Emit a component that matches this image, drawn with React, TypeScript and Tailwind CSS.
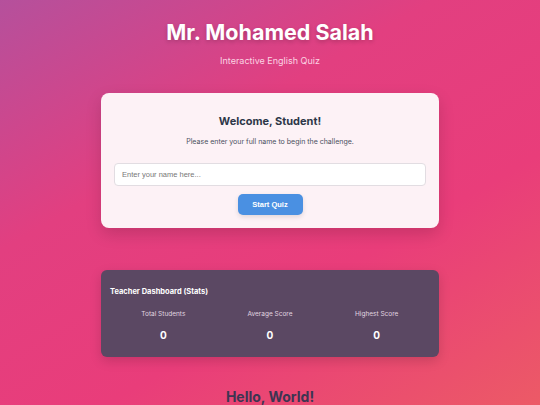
export default function App() {
    const stats = [
        { label: 'Total Students', value: 0 },
        { label: 'Average Score', value: 0 },
        { label: 'Highest Score', value: 0 },
    ];

    return (
        <div
            className="flex h-[405px] w-[540px] flex-col items-center overflow-hidden bg-[linear-gradient(150deg,#b5509c_0%,#e23f80_35%,#e93d7a_65%,#ec5a66_100%)] font-['Inter','Open_Sans',sans-serif]"
        >
            <h1 className="mt-[19px] text-[21.5px] leading-[26px] font-bold text-white [text-shadow:0_2px_4px_rgba(0,0,0,0.2)]">
                Mr. Mohamed Salah
            </h1>
            <p className="mt-[10px] text-[9px] leading-[12px] text-[#fbd3e2]">Interactive English Quiz</p>

            <div className="mt-[26px] flex w-[338px] flex-col items-center rounded-[8px] bg-[#fdf2f6] px-[13px] pt-[21px] pb-[13px] shadow-[0_6px_16px_rgba(0,0,0,0.15)]">
                <h2 className="text-[11px] leading-[14px] font-bold text-[#2d3748]">Welcome, Student!</h2>
                <p className="mt-[9px] text-[7px] leading-[10px] text-[#4a5060]">
                    Please enter your full name to begin the challenge.
                </p>
                <input
                    type="text"
                    placeholder="Enter your name here..."
                    className="mt-[16px] h-[23px] w-full rounded-[4px] border border-[#e2dde2] bg-white px-[7px] font-['Liberation_Sans',Arial,sans-serif] text-[7.5px] text-[#333] outline-none placeholder:text-[#777]"
                />
                <button className="mt-[8px] h-[21px] w-[65px] rounded-[5px] bg-[#4a90e2] font-['Liberation_Sans',Arial,sans-serif] text-[7.5px] font-bold text-white shadow-[0_2px_5px_rgba(0,0,0,0.12)]">
                    Start Quiz
                </button>
            </div>

            <div className="mt-[42px] w-[338px] rounded-[6px] bg-[#5b4863] px-[9px] pt-[17px] pb-[16px] shadow-[0_4px_12px_rgba(0,0,0,0.15)]">
                <h3 className="text-[7.5px] leading-[10px] font-bold text-white">Teacher Dashboard (Stats)</h3>
                <div className="mt-[13px] grid grid-cols-3">
                    {stats.map((s) => (
                        <div key={s.label} className="flex flex-col items-center">
                            <span className="text-[6.5px] leading-[9px] text-[#e0d6e0]">{s.label}</span>
                            <span className="mt-[10px] text-[10px] leading-[12px] font-bold text-white">{s.value}</span>
                        </div>
                    ))}
                </div>
            </div>

            <h2 className="mt-[31px] text-[14px] leading-[18px] font-bold text-[#3d3552]">Hello, World!</h2>
        </div>
    );
}
